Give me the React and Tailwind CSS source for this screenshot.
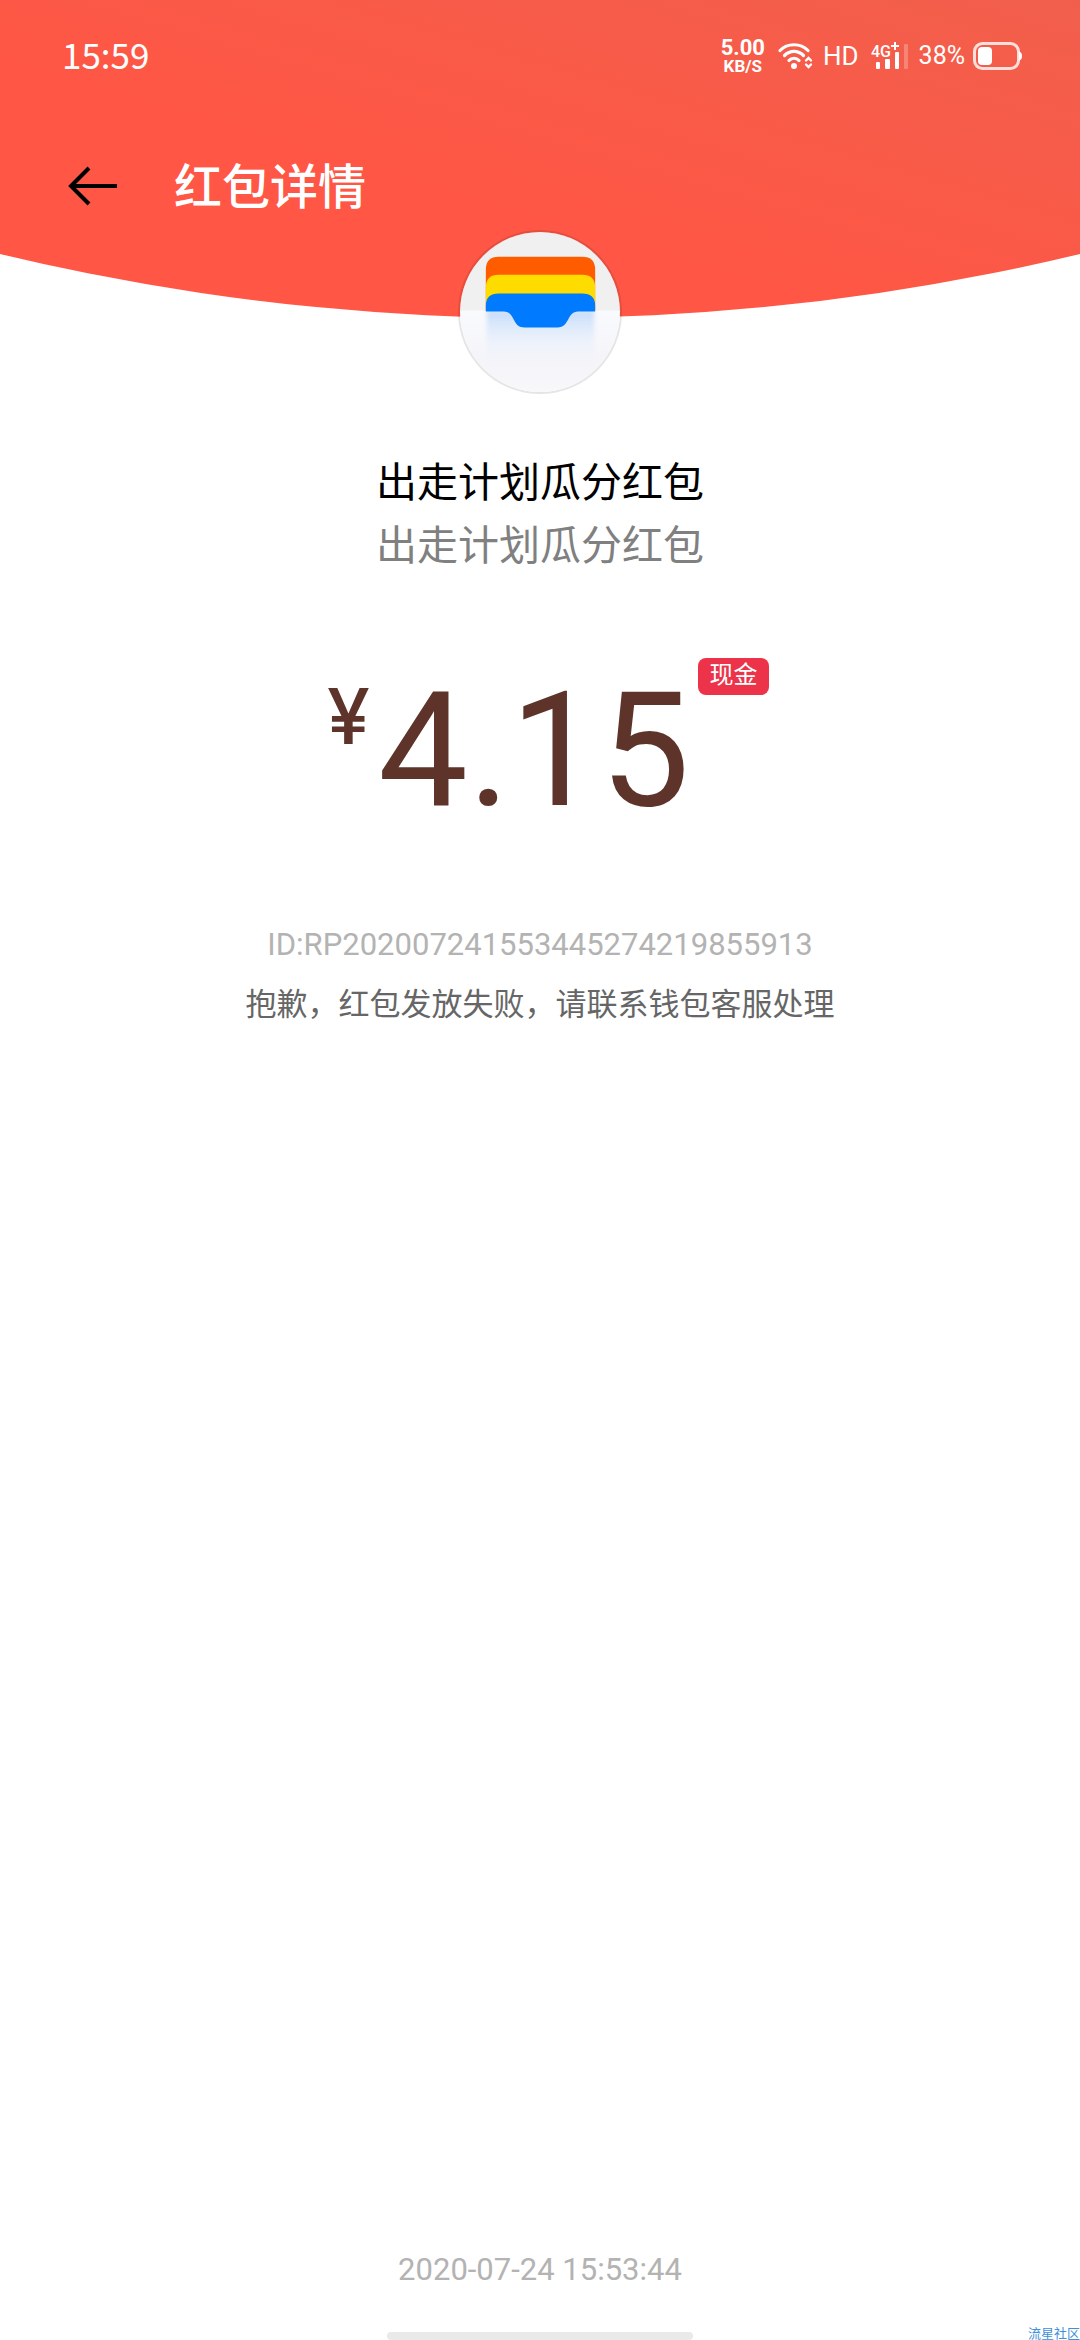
import React from "react";

const packet = {
  title: "出走计划瓜分红包",
  subtitle: "出走计划瓜分红包",
  amount: "4.15",
  tag: "现金",
  id: "RP202007241553445274219855913",
  message: "抱歉，红包发放失败，请联系钱包客服处理",
  time: "2020-07-24 15:53:44",
};

function WifiIcon() {
  return (
    <svg viewBox="0 0 36 28" className="w-9 h-7" fill="none" stroke="currentColor" strokeWidth="3.2" strokeLinecap="round">
      <path d="M3 8.5C10.500 .8 23.500 .8 31 8.500" />
      <path d="M7.500 13.500C13 8 21 8 26.500 13.500" />
      <path d="M12 18.500C14.500 15.500 19.500 15.500 22 18.500" />
      <circle cx="17" cy="24" r="3" fill="currentColor" stroke="none" />
      <path d="M29 18.500L31.500 16L34 18.500M29 22.500L31.500 25L34 22.500" strokeWidth="2.4" />
    </svg>
  );
}

function SignalIcon() {
  return (
    <svg viewBox="0 0 40 28" className="w-10 h-7" fill="currentColor">
      <text x="0" y="15" fontSize="16" fontWeight="500" fontFamily="Roboto, sans-serif">4G</text>
      <path d="M20 4h8M24 0v8" stroke="currentColor" strokeWidth="2" />
      <rect x="5" y="20" width="4" height="7" rx="1" />
      <rect x="14" y="17" width="5" height="10" rx="1" />
      <rect x="24" y="10" width="4" height="17" rx="1" />
      <rect x="33" y="2" width="4" height="25" rx="1" opacity="0.25" />
    </svg>
  );
}

function BatteryIcon() {
  return (
    <svg viewBox="0 0 49 28" className="w-[49px] h-7" fill="currentColor">
      <rect x="1.500" y="1.500" width="44" height="25" rx="8" fill="none" stroke="currentColor" strokeWidth="3" opacity="0.8" />
      <rect x="5" y="5" width="14" height="18" rx="4" />
      <path d="M46 9.500Q49 10 49 14Q49 18 46 18.500Z" />
    </svg>
  );
}

function WalletLogo() {
  return (
    <svg viewBox="0 0 161 161" className="w-full h-full">
      <defs>
        <linearGradient id="pocket" x1="0" y1="0" x2="0" y2="1">
          <stop offset="0" stopColor="#c4dcfb" />
          <stop offset="1" stopColor="#f4f5fb" stopOpacity="0" />
        </linearGradient>
        <linearGradient id="lower" x1="0" y1="0" x2="0" y2="1">
          <stop offset="0" stopColor="#f9fafe" />
          <stop offset="0.6" stopColor="#f4f4f9" />
          <stop offset="1" stopColor="#f8f8fb" />
        </linearGradient>
        <filter id="soft">
          <feGaussianBlur stdDeviation="2" />
        </filter>
      </defs>
      <rect width="161" height="80" fill="#f0f0f0" />
      <rect y="79" width="161" height="82" fill="url(#lower)" />
      <path d="M26 79V38Q26 25 39 25H123Q136 25 136 38V79Z" fill="#ff5c00" />
      <path d="M26 79V56Q26 43 39 43H123Q136 43 136 56V79Z" fill="#ffdc00" />
      <rect x="27" y="79" width="108" height="54" fill="url(#pocket)" filter="url(#soft)" />
      <path
        d="M26 80V74Q26 62 39 62H123Q136 62 136 74V80H119C107 80 111 96 98 96H65C52 96 56 80 44 80Z"
        fill="#007aff"
      />
    </svg>
  );
}

function StatusBar() {
  return (
    <div className="h-28 pl-[62px] pr-[58px] flex items-center justify-between text-white">
      <span className="pb-1 text-[35px] leading-9 font-['Noto_Sans_CJK_SC',sans-serif]">15:59</span>
      <div className="flex items-center">
        <div className="flex flex-col items-center font-bold">
          <span className="text-[22px] leading-5">5.00</span>
          <span className="text-[17px] leading-4">KB/S</span>
        </div>
        <span className="ml-3">
          <WifiIcon />
        </span>
        <span className="ml-2.5 text-[26px] leading-7">HD</span>
        <span className="ml-3">
          <SignalIcon />
        </span>
        <span className="ml-2 text-[25px] leading-7">38%</span>
        <span className="ml-2">
          <BatteryIcon />
        </span>
      </div>
    </div>
  );
}

function App() {
  return (
    <div className="min-h-screen bg-white relative flex flex-col font-['Roboto','Noto_Sans_CJK_SC',sans-serif]">
      {/* Curved header */}
      <header className="h-[318px] bg-linear-to-tr from-[#ff5645] from-40% to-[#f15f4c] [clip-path:circle(214vw_at_50%_calc(100%-214vw))]">
        <StatusBar />
        <div className="h-[148px] pl-[68px] flex items-center">
          <button type="button" aria-label="返回" className="text-black">
            <svg viewBox="0 0 50 40" className="w-[50px] h-10" fill="none" stroke="currentColor" strokeWidth="4">
              <path d="M49 20H3M21 2L3 20L21 38" />
            </svg>
          </button>
          <h1 className="ml-14 pt-1 text-[48px] leading-none font-medium text-white">红包详情</h1>
        </div>
      </header>

      <main className="flex-1 flex flex-col items-center text-center">
        {/* Logo */}
        <div className="relative -mt-[86px] w-40 h-40 rounded-full overflow-hidden ring-2 ring-black/10">
          <WalletLogo />
        </div>

        <h2 className="mt-[60px] text-[41px] leading-[63px] text-black">{packet.title}</h2>
        <p className="text-[41px] leading-[63px] text-[#808080]">{packet.subtitle}</p>

        {/* Amount */}
        <div className="mt-20 ml-4 flex items-start text-[#5e342a]">
          <span className="mt-5 text-[77px] leading-[77px] font-medium font-['Inter',sans-serif]">¥</span>
          <span className="ml-2 text-[160px] leading-[186px]">{packet.amount}</span>
          <span className="ml-2 w-[71px] h-[37px] rounded-lg bg-[#ec3349] text-white text-[24px] leading-[34px]">
            {packet.tag}
          </span>
        </div>

        <p className="mt-[71px] text-[31px] leading-[60px] text-[#b3b3b3]">ID:{packet.id}</p>
        <p className="text-[31px] leading-[60px] text-[#666666]">{packet.message}</p>
      </main>

      <footer className="flex flex-col items-center">
        <time className="text-[31px] leading-[60px] text-[#b3b3b3]">{packet.time}</time>
        <div className="mt-8 w-[306px] h-2 rounded-full bg-[#e9e9e9]"></div>
      </footer>

      {/* Watermark */}
      <span className="absolute right-0 bottom-0 text-[13px] leading-3 text-[#3f8fdc]">流星社区</span>
    </div>
  );
}

export default App;
